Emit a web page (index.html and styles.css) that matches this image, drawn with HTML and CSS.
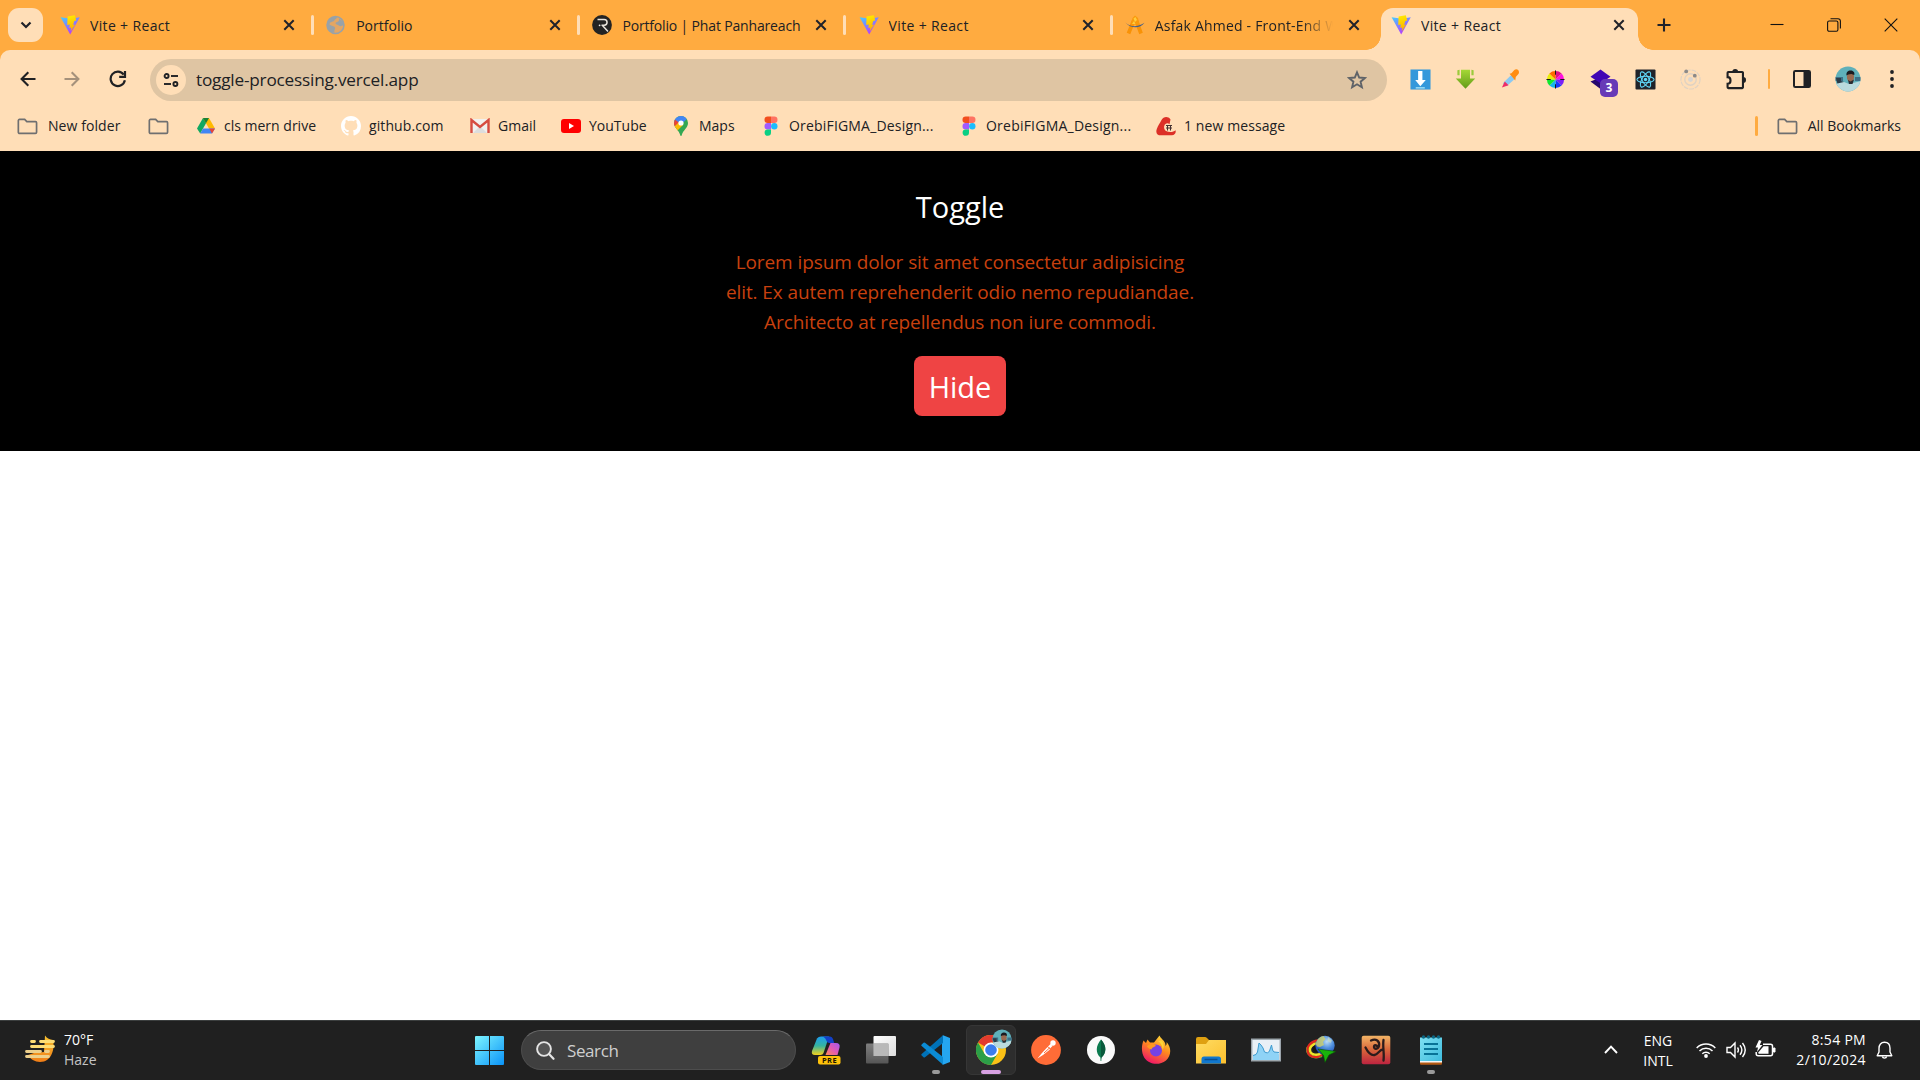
FILE: index.html
```html
<!DOCTYPE html>
<html lang="en">
<head>
<meta charset="utf-8">
<title>Vite + React</title>
<link rel="stylesheet" href="styles.css">
</head>
<body>
<svg class="defs" width="0" height="0">
  <defs>
    <linearGradient id="viteA" x1="0" y1="0" x2=".6" y2="1"><stop offset="0" stop-color="#41d1ff"/><stop offset="1" stop-color="#bd34fe"/></linearGradient>
    <linearGradient id="viteB" x1=".4" y1="0" x2=".6" y2="1"><stop offset="0" stop-color="#ffea00"/><stop offset="1" stop-color="#ffa800"/></linearGradient>
    <linearGradient id="win" x1="0" y1="0" x2="1" y2="1"><stop offset="0" stop-color="#7df5ff"/><stop offset="1" stop-color="#0a93f8"/></linearGradient>
    <linearGradient id="sun" x1="0" y1="0" x2="0" y2="1"><stop offset="0" stop-color="#f8c331"/><stop offset="1" stop-color="#f07d17"/></linearGradient>
    <linearGradient id="copA" x1="0" y1="0" x2="0" y2="1"><stop offset="0" stop-color="#1c9df0"/><stop offset=".5" stop-color="#35b3a0"/><stop offset="1" stop-color="#f5d21c"/></linearGradient>
    <linearGradient id="copB" x1="1" y1="0" x2="0" y2="1"><stop offset="0" stop-color="#a158f2"/><stop offset=".5" stop-color="#e25ab4"/><stop offset="1" stop-color="#ff8a55"/></linearGradient>
    <linearGradient id="ff" x1=".8" y1="0" x2=".3" y2="1"><stop offset="0" stop-color="#ffe23e"/><stop offset=".45" stop-color="#ff8a1e"/><stop offset="1" stop-color="#f0126a"/></linearGradient>
    <linearGradient id="folderG" x1="0" y1="0" x2="1" y2="1"><stop offset="0" stop-color="#ffdc63"/><stop offset="1" stop-color="#fcc02e"/></linearGradient>
    <linearGradient id="avro" x1="0" y1="0" x2="0" y2="1"><stop offset="0" stop-color="#f3b566"/><stop offset=".5" stop-color="#d8653a"/><stop offset="1" stop-color="#bd2340"/></linearGradient>
    <linearGradient id="note" x1="0" y1="0" x2="1" y2="1"><stop offset="0" stop-color="#7fe0f2"/><stop offset="1" stop-color="#3dbbdd"/></linearGradient>
    <linearGradient id="tv" x1="0" y1="0" x2="1" y2="1"><stop offset="0" stop-color="#fff"/><stop offset="1" stop-color="#ddd"/></linearGradient>
    <linearGradient id="tvb" x1="0" y1="0" x2="0" y2="1"><stop offset="0" stop-color="#8a8a8a"/><stop offset="1" stop-color="#5c5c5c"/></linearGradient>
    <linearGradient id="green" x1="0" y1="0" x2="0" y2="1"><stop offset="0" stop-color="#a5d836"/><stop offset="1" stop-color="#629a18"/></linearGradient>
    <radialGradient id="idm" cx=".6" cy=".3" r=".75"><stop offset="0" stop-color="#b9dcf7"/><stop offset=".45" stop-color="#4f8fdc"/><stop offset="1" stop-color="#123fae"/></radialGradient>
    <symbol id="vite" viewBox="0 0 20 20">
      <path d="M.6 2.200 10.200 19.600 19.800 2.200 11 3.800z" fill="url(#viteA)"/>
      <path d="M14.800.2 7.600 1.400 7.200 10l2.600-.4-.5 3.400 2-.4-.5 4 4.300-7-2 .3 1.200-4 2-.3z" fill="url(#viteB)"/>
    </symbol>
    <symbol id="x" viewBox="0 0 12 12"><path d="M1.300 1.300 10.700 10.700M10.700 1.300 1.300 10.700" stroke="#20222a" stroke-width="2" fill="none"/></symbol>
    <symbol id="folder" viewBox="0 0 22 18"><path d="M2.500 1.500H8l2.300 2.400H19.500a1.100 1.100 0 0 1 1.100 1.100V15a1.300 1.300 0 0 1-1.300 1.300H2.700A1.300 1.300 0 0 1 1.300 15V2.700A1.200 1.200 0 0 1 2.500 1.500z" fill="none" stroke="#6f6f70" stroke-width="1.800"/></symbol>
    <symbol id="figma" viewBox="0 0 14 20">
      <path d="M7 .6H3.700a3.200 3.200 0 0 0 0 6.400H7z" fill="#f24e1e"/><path d="M7 .6h3.300a3.200 3.200 0 0 1 0 6.400H7z" fill="#ff7262"/>
      <path d="M7 7H3.700a3.200 3.200 0 0 0 0 6.400H7z" fill="#a259ff"/><circle cx="10.300" cy="10.200" r="3.200" fill="#1abcfe"/>
      <path d="M7 13.400H3.700A3.200 3.200 0 1 0 7 16.600z" fill="#0acf83"/>
    </symbol>
    <symbol id="avatar" viewBox="0 0 26 26">
      <clipPath id="avc"><circle cx="13" cy="13" r="12.500"/></clipPath>
      <g clip-path="url(#avc)"><rect width="26" height="26" fill="#5fb0ba"/><path d="M0 11h8v4H0zM20 11h6v4h-6z" fill="#3d6f86"/><path d="M1 12h5v3l3 1-2 4H3z" fill="#2b3b47"/><path d="M0 18l9-2 5 2 12-3v11H0z" fill="#b9dadd"/><ellipse cx="15.500" cy="11" rx="3.600" ry="5" fill="#9a6a50"/><path d="M11.500 9.500c-.5-3.500 1.500-5 4-5s4.500 1.500 3.800 4.500l-3-1-3 .5z" fill="#1b1b20"/><path d="M13 14l2.500 1.500L19 13.500l-1.500 4.500h-3.500z" fill="#2a2a30"/></g>
    </symbol>
  </defs>
</svg>

<div class="screen">
  <div class="tabstrip">
    <button class="tab-search"><svg width="12" height="8" viewBox="0 0 12 8"><path d="M1.500 1.500 6 6l4.500-4.500" fill="none" stroke="#20222a" stroke-width="2.200"/></svg></button>
    <div class="tab"><svg class="fav"><use href="#vite"/></svg><span class="title t-vite">Vite + React</span><svg class="close"><use href="#x"/></svg><i class="sep"></i></div>
    <div class="tab"><svg class="fav" viewBox="0 0 20 20"><circle cx="9.500" cy="10" r="8.500" fill="#e3a663" stroke="#98a2a8" stroke-width="1.500"/><path d="M2 5.500 6.500 2 11 2c0 2-2.500 2-3 4-1.500 1-4 .5-4.500 3.500C5.500 11 8 11 9 12.500c.5 1.500-1 2-.5 5L5 17c-3-2-4.500-7-3-11.500z" fill="#98a2a8"/><path d="M13 3.500l4 3 1 4c-2 0-3 1-4.500.5C12.500 9.500 10 10 9.500 8.500c0-2 3-1 3.500-3z" fill="#98a2a8"/></svg><span class="title t-port">Portfolio</span><svg class="close"><use href="#x"/></svg><i class="sep"></i></div>
    <div class="tab"><svg class="fav" viewBox="0 0 20 20"><circle cx="10" cy="10" r="9.900" fill="#232323"/><path d="M5.500 4.500h6.700c3.800 0 3.800 5.700 0 5.700H9.500M10.500 10.500l5.500 6" fill="none" stroke="#e8e3dc" stroke-width="1.500"/><circle cx="7.600" cy="10.300" r=".9" fill="#eee"/></svg><span class="title t-phat">Portfolio | Phat Panhareach</span><svg class="close"><use href="#x"/></svg><i class="sep"></i></div>
    <div class="tab"><svg class="fav"><use href="#vite"/></svg><span class="title t-vite">Vite + React</span><svg class="close"><use href="#x"/></svg><i class="sep"></i></div>
    <div class="tab"><svg class="fav" viewBox="0 0 20 20"><path d="M3.500 18.500 8.500 6M16 18.500 11.500 6" stroke="#f99206" stroke-width="3.800"/><path d="M5.800 9.500 7.500 3 10 .5l3 2.500 1.500 6.500z" fill="#f99a0c"/><path d="M8.500 3.500l2-1.500 1.500 3-2 2zM7 9l2-3 1.500 3z" fill="#ffcb3c"/><path d="M.5 7.500c5 5 12 5 19 .3-4.500 6-13.500 6.200-19-.3z" fill="#3f5f8c"/></svg><span class="title t-asfak">Asfak Ahmed - Front-End Web</span><svg class="close"><use href="#x"/></svg></div>
    <div class="tab active"><svg class="fav"><use href="#vite"/></svg><span class="title t-vite">Vite + React</span><svg class="close"><use href="#x"/></svg></div>
    <svg class="newtab" viewBox="0 0 14 14"><path d="M7 .5v13M.5 7h13" stroke="#20222a" stroke-width="2.100"/></svg>
    <div class="winctl">
      <svg width="14" height="14" viewBox="0 0 14 14"><path d="M.5 6.500h13" stroke="#111" stroke-width="1.100"/></svg>
      <svg width="14" height="14" viewBox="0 0 14 14"><rect x=".6" y="3" width="10.300" height="10.300" rx="1.500" fill="none" stroke="#111" stroke-width="1.100"/><path d="M3.500.7h7.500a2.500 2.500 0 0 1 2.400 2.400v7.400" fill="none" stroke="#111" stroke-width="1.100"/></svg>
      <svg width="14" height="14" viewBox="0 0 14 14"><path d="M.7.7l12.600 12.600M13.300.7.7 13.300" stroke="#111" stroke-width="1.100"/></svg>
    </div>
  </div>

  <div class="chrome-bar">
    <div class="toolbar">
      <div class="nav">
        <svg width="16" height="16" viewBox="0 0 16 16"><path d="M15.500 8H2M8.300 1.300 1.600 8l6.700 6.700" fill="none" stroke="#202124" stroke-width="2.100"/></svg>
        <svg width="16" height="16" viewBox="0 0 16 16"><path d="M.5 8H14M7.700 1.300 14.400 8l-6.700 6.700" fill="none" stroke="#a5917b" stroke-width="2.100"/></svg>
        <svg class="reload" width="18" height="18" viewBox="0 0 18 18"><path d="M15.900 10.300A7.200 7.200 0 1 1 14.700 4.600" fill="none" stroke="#202124" stroke-width="2.200"/><path d="M16 1v5.800h-5.800" fill="none" stroke="#202124" stroke-width="2.200"/></svg>
      </div>
      <div class="omnibox">
        <span class="site"><svg width="16" height="14" viewBox="0 0 16 14"><g fill="none" stroke="#202124" stroke-width="1.900"><circle cx="3.600" cy="3" r="2"/><path d="M8 3h7"/><circle cx="12.400" cy="11" r="2"/><path d="M1 11h7"/></g></svg></span>
        <span class="url">toggle-processing.vercel.app</span>
        <svg class="star" width="20" height="20" viewBox="0 0 20 20"><path d="M10 2.300l2.200 5.200 5.700.5-4.300 3.700 1.300 5.500-4.900-2.900-4.900 2.900 1.300-5.500L2.100 8l5.700-.5z" fill="none" stroke="#5f6368" stroke-width="1.900"/></svg>
      </div>
      <div class="exts">
        <svg viewBox="0 0 22 22"><rect x=".5" y=".5" width="21" height="21" fill="#3498db"/><path d="M8.500 2h4.500v9.500h3.500L10.800 18 5.500 11.500h3z" fill="#fff"/><path d="M6 19h9.500v1.500H6z" fill="#9fe0f7"/></svg>
        <svg viewBox="0 0 22 22"><path d="M2.500 1.200 4.800.8V6.500H2.500zM19.500 1.200 17.200.8v5.700h2.300z" fill="#9bcb3c"/><path d="M6.300.8h9.400V10h5.500L11 20.800.8 10h5.500z" fill="url(#green)"/></svg>
        <svg viewBox="0 0 22 22"><path d="M12 6l4 4-9 8-4-3z" fill="#8cc9f2"/><path d="M5 13l4 4-7 2.500z" fill="#ee2c68"/><path d="M10 5l2-.5 3-3.500c3-2 6 1 4.500 4L16.500 8.500 16 12z" fill="#ff8c10"/></svg>
        <svg viewBox="0 0 22 22"><g transform="translate(11 11)"><path d="M0 0V-9A9 9 0 0 1 6.400-6.400z" fill="#e0108a"/><path d="M0 0 6.400-6.400A9 9 0 0 1 9 0z" fill="#ff10e0"/><path d="M0 0H9A9 9 0 0 1 6.400 6.400z" fill="#7a20f8"/><path d="M0 0 6.400 6.400A9 9 0 0 1 0 9z" fill="#1838ff"/><path d="M0 0V9A9 9 0 0 1-6.400 6.400z" fill="#15b5ee"/><path d="M0 0-6.400 6.400A9 9 0 0 1-9 0z" fill="#10e830"/><path d="M0 0H-9A9 9 0 0 1-6.400-6.400z" fill="#e8ec08"/><path d="M0 0-6.400-6.400A9 9 0 0 1 0-9z" fill="#ff6a00"/><path d="M0-9.500V-5M0 5V9.500M-9.500 0H-5M5 0H9.500" stroke="#111" stroke-width="1"/></g></svg>
        <span class="ext-badge"><svg viewBox="0 0 22 22"><path d="M11 9 21 14 11 21 .5 13z" fill="#26076d"/><path d="M11 .5 21.500 8 11 15 .5 8z" fill="#4106b4"/></svg><b>3</b></span>
        <svg viewBox="0 0 22 22"><rect x=".5" y=".5" width="21" height="21" rx="1" fill="#20232a"/><g fill="none" stroke="#61dafb" stroke-width="1.100"><ellipse cx="11" cy="11" rx="9" ry="3.500"/><ellipse cx="11" cy="11" rx="9" ry="3.500" transform="rotate(60 11 11)"/><ellipse cx="11" cy="11" rx="9" ry="3.500" transform="rotate(120 11 11)"/></g><circle cx="11" cy="11" r="1.800" fill="#61dafb"/></svg>
        <svg viewBox="0 0 22 22"><g fill="none" stroke="#dfd2c3"><circle cx="11" cy="11" r="10" stroke-width="1.200" stroke-dasharray="5 1"/><circle cx="11" cy="11" r="6" stroke-width="1.500"/></g><circle cx="11" cy="11" r="2.600" fill="#d8d5d2"/><circle cx="6.500" cy="2.500" r="2" fill="#8c8a89"/><circle cx="15.500" cy="7" r="2" fill="#8c8a89"/></svg>
        <svg viewBox="0 0 22 22"><path d="M3.500 3.200H18a.8.800 0 0 1 .8.800v15.200a.8.800 0 0 1-.8.800H3.500a.8.800 0 0 1-.8-.8V15.500C6.800 15.500 6.800 8.500 2.700 8.500V4a.8.800 0 0 1 .8-.8z" fill="none" stroke="#202124" stroke-width="2.200"/><path d="M7.700 3a3 3 0 0 1 6 0zM19 8.500a3 3 0 0 1 0 6z" fill="#202124"/></svg>
      </div>
      <i class="bar-sep"></i>
      <svg class="panel" viewBox="0 0 18 18"><rect x="1" y="1" width="16" height="16" rx="1.300" fill="none" stroke="#202124" stroke-width="2"/><path d="M10.500 1H17v16h-6.500z" fill="#202124"/></svg>
      <svg class="me"><use href="#avatar"/></svg>
      <svg class="dots" viewBox="0 0 4 18"><g fill="#202124"><circle cx="2" cy="2" r="1.900"/><circle cx="2" cy="9" r="1.900"/><circle cx="2" cy="16" r="1.900"/></g></svg>
    </div>

    <div class="bookmarks">
      <div class="bm b1"><svg class="fold"><use href="#folder"/></svg><span>New folder</span></div>
      <div class="bm b2"><svg class="fold"><use href="#folder"/></svg></div>
      <div class="bm b3"><svg width="18" height="18" viewBox="0 0 18 18"><path d="M6 1h6l-3 5.200-5.800 10.300L0 11.500z" fill="#11a861"/><path d="M6 1h6l6 10.500h-6z" fill="#ffba00"/><path d="M6 1h6L9 6.200z" fill="#188038"/><path d="M6 11.500h12l-3 5H3.200z" fill="#4285f4"/><path d="M12.200 11.500H18l-3 5z" fill="#ea4335"/></svg><span>cls mern drive</span></div>
      <div class="bm b4"><svg width="20" height="20" viewBox="0 0 16 16"><path fill="#fff" d="M8 0C3.580 0 0 3.580 0 8c0 3.540 2.290 6.530 5.470 7.590.4.070.55-.17.55-.38 0-.19-.01-.82-.01-1.490-2.010.37-2.530-.49-2.690-.94-.09-.23-.48-.94-.82-1.130-.28-.15-.68-.52-.01-.53.63-.01 1.080.58 1.230.82.72 1.210 1.870.87 2.330.66.070-.52.28-.87.51-1.070-1.780-.2-3.640-.89-3.640-3.950 0-.87.31-1.590.82-2.150-.08-.2-.36-1.020.08-2.120 0 0 .67-.21 2.200.82.64-.18 1.320-.27 2-.27s1.360.09 2 .27c1.530-1.040 2.200-.82 2.200-.82.44 1.100.16 1.920.08 2.120.51.56.82 1.270.82 2.150 0 3.070-1.870 3.750-3.650 3.950.29.25.54.73.54 1.480 0 1.070-.01 1.930-.01 2.200 0 .21.15.46.55.38A8.010 8.010 0 0 0 16 8c0-4.420-3.580-8-8-8z"/></svg><span>github.com</span></div>
      <div class="bm b5"><svg width="20" height="16" viewBox="0 0 20 16"><rect x="1" y="1" width="18" height="14" fill="#f2f0ee"/><path d="M3 15 10 8l7 7z" fill="#ddd"/><path d="M1.500 15V2l8.500 7 8.500-7v13" fill="none" stroke="#d64c41" stroke-width="2.400"/></svg><span>Gmail</span></div>
      <div class="bm b6"><svg width="20" height="14" viewBox="0 0 20 14"><rect width="20" height="14" rx="3" fill="#f00"/><path d="M8 4l5 3-5 3z" fill="#fff"/></svg><span>YouTube</span></div>
      <div class="bm b7"><svg width="14" height="20" viewBox="0 0 14 20"><clipPath id="pin"><path d="M7 0a7 7 0 0 1 7 7c0 5-5 7-6.300 12.300Q7 21 6.300 19.300C5 14 0 12 0 7a7 7 0 0 1 7-7z"/></clipPath><g clip-path="url(#pin)"><rect width="14" height="20" fill="#34a853"/><path d="M0 0h14L9 6 4.500 10 0 6z" fill="#4285f4"/><path d="M0 3l5 3.500L1.500 11H0z" fill="#ea4335"/><path d="M9 9 2 16l-2-5 5-5z" fill="#fbbc04"/><path d="M8 0l5 3-4.500 4z" fill="#4285f4"/></g><circle cx="7" cy="7" r="2.600" fill="#fff"/></svg><span>Maps</span></div>
      <div class="bm b8"><svg class="fig"><use href="#figma"/></svg><span>OrebiFIGMA_Design...</span></div>
      <div class="bm b9"><svg class="fig"><use href="#figma"/></svg><span>OrebiFIGMA_Design...</span></div>
      <div class="bm b10"><svg width="20" height="20" viewBox="0 0 20 20"><path d="M14.500 3.500C12 0 7.500.5 5.500 4 4 7 2 9.500.8 13c-1.500 4 .7 6.300 4 6.300h11c3 0 4.500-2.800 3.700-5-2 2-6.500 2.500-9.500.7-2.500-1.700-2.500-5.500-.5-7 1.500-1.200 3-.7 4 .3z" fill="#dc2f27"/><path d="M10 9.500h6M10 12h6M11.500 9v5.500M14.500 9v5.500" stroke="#433" stroke-width="1"/></svg><span>1 new message</span></div>
      <i class="bar-sep"></i>
      <div class="bm all"><svg class="fold"><use href="#folder"/></svg><span>All Bookmarks</span></div>
    </div>
  </div>

  <main class="page">
    <section class="hero">
      <h1>Toggle</h1>
      <p>Lorem ipsum dolor sit amet consectetur adipisicing<br>elit. Ex autem reprehenderit odio nemo repudiandae.<br>Architecto at repellendus non iure commodi.</p>
      <button class="hide">Hide</button>
    </section>
  </main>

  <div class="taskbar">
    <div class="weather">
      <svg width="30" height="28" viewBox="0 0 30 28"><path d="M20 .5c2 3 5 4 8 4.500 2 8-1 22-13 22-5 0-10-3-12-7l6-2 10-1z" fill="url(#sun)"/><g stroke-linecap="round" stroke-width="2.800"><path d="M6.500 6.500h3M15.500 6.500h13M6.500 11.500h22" stroke="#fddc74"/><path d="M1.500 16.500h14M20.500 16.500h3M1.500 21.500h22" stroke="#edcf8b"/></g></svg>
      <div><span>70°F</span><span class="dim">Haze</span></div>
    </div>
    <div class="apps">
      <svg class="start" viewBox="0 0 29 29"><path d="M1 0H14V14H0V1A1 1 0 0 1 1 0zM15 0H28A1 1 0 0 1 29 1V14H15zM0 15H14V29H1A1 1 0 0 1 0 28zM15 15H29V28A1 1 0 0 1 28 29H15z" fill="url(#win)"/></svg>
      <div class="search"><svg width="19" height="19" viewBox="0 0 19 19"><circle cx="8" cy="8" r="6.900" fill="#555" stroke="#e4e4e4" stroke-width="1.900"/><path d="M13 13l4.500 4.800" stroke="#e4e4e4" stroke-width="2.200" stroke-linecap="round"/></svg><span>Search</span></div>
      <div class="app"><svg viewBox="0 0 30 30"><path d="M6 3.500Q7.500 1.500 10 1.500h8L12.500 18q-.7 2-3 2H4q-4 0-3-4z" fill="url(#copA)"/><path d="M12 1.500h7q2.300 0 3 2.500l1.200 4h-5q-2 0-2.600-2-.8-3-3.600-4.500z" fill="#1340c8"/><path d="M19.500 8H25q4.500 0 3.500 4.500L26.500 20H14.500z" fill="url(#copB)"/><rect x="7" y="21" width="22.500" height="8.500" rx="2" fill="#ffc20a"/></svg><em class="pre">PRE</em></div>
      <div class="app"><svg viewBox="0 0 30 30"><rect x="7.500" y="1" width="22.500" height="20" rx="1" fill="url(#tv)"/><rect x="0" y="8.500" width="22.500" height="20" rx="1" fill="url(#tvb)" opacity=".9"/><path d="M7.500 8.500h15V21h-15z" fill="#b9b9b9"/></svg></div>
      <div class="app run"><svg viewBox="0 0 30 30"><path d="M22 .3 29 3v24l-7 2.700-1-1V2z" fill="#25a6f0"/><path d="M22 .3V8L4 22.300q-.8.500-1.500 0L.7 20.600q-.9-.8 0-1.600z" fill="#0072b8"/><path d="M22 29.700V22L4 7.700q-.8-.5-1.500 0L.7 9.400q-.9.800 0 1.600z" fill="#0b8bd4"/></svg></div>
      <div class="app current"><svg viewBox="0 0 30 30"><circle cx="15" cy="15" r="15" fill="#fbc116"/><path d="M15 15 2 7.500A15 15 0 0 1 28 7.500H15z" fill="#e33b2e"/><path d="M2 7.500A15 15 0 0 0 15 30L21.500 18.700 15 15 8.500 18.700z" fill="#2c9f48"/><circle cx="15" cy="15" r="7.500" fill="#fff"/><circle cx="15" cy="15" r="5.800" fill="#3b7ded"/></svg><svg class="mini"><use href="#avatar"/></svg></div>
      <div class="app"><svg viewBox="0 0 30 30"><circle cx="15" cy="15" r="14.900" fill="#ff6c37"/><path d="M6.500 23.500l4-5L16.500 12l2.500 2.500-7 5.500zM17 11.500l2.500-2.500 2 2-2.500 2.500z" fill="#fff"/><circle cx="22" cy="8" r="2.700" fill="#fff"/><path d="M13 18l6-5.500" stroke="#ff6c37"/></svg></div>
      <div class="app"><svg viewBox="0 0 30 30"><circle cx="15" cy="15" r="14" fill="#fafafa"/><path d="M15 4.500C21 11 20.500 18 15.500 22.500L15.300 26h-.7l-.2-3.500C9.500 18 9.500 11 15 4.500z" fill="#0b7a4f"/><path d="M15 4.500C21 11 20.500 18 15.500 22.500L15 24z" fill="#08583b"/></svg></div>
      <div class="app"><svg viewBox="0 0 30 30"><path d="M18.500.500C20 4 23 5 24 8q.5 1.500.6 3c1-1 1.200-2.500 1-4C31 13 30 21 25 25.500 18 31 8 29.500 3.500 23 0 17.500.5 10 2.500 5.500L5 8l1.500-3.500L9 7.500h4z" fill="url(#ff)"/><circle cx="15" cy="15.500" r="6" fill="#7542e5"/><path d="M6 11c3-2.500 6-2 9-.5-1 1.500-4 1.500-4.500 4-2-.5-4-1.500-4.500-3.500z" fill="#ff9a1f"/><path d="M17 6c3 2 5 6 4.500 9 2-3 1.500-7-1-9.500z" fill="#ffd536"/></svg></div>
      <div class="app"><svg viewBox="0 0 30 30"><path d="M0 4q0-2 2-2h7q1 0 2 1l2 2h15q2 0 2 2v3H0z" fill="#dfa011"/><path d="M0 9h10l3-4h17v23.500H0z" fill="url(#folderG)"/><path d="M5.500 28.500V24q0-2.500 2.500-2.500h14.500q2.500 0 2.500 2.500v4.500z" fill="#1178cf"/><path d="M8.500 24.500h13" stroke="#0a4f91" stroke-width="1.500"/></svg></div>
      <div class="app"><svg viewBox="0 0 30 30"><rect x=".7" y="4.200" width="28.600" height="21.600" fill="#e9f0f6" stroke="#9aa3aa" stroke-width="1.400"/><path d="M2 20.500l3-1 1.500-2.500L8 8l2 2 2 3 1.500 4 3 1 2-2 2-6 1 5 1.500 2 4 .5 1 2V25H2z" fill="#8fd3f6"/><path d="M2 20.500l3-1 1.500-2.500L8 8l2 2 2 3 1.500 4 3 1 2-2 2-6 1 5 1.500 2 5 .5" fill="none" stroke="#3d9bd0"/></svg></div>
      <div class="app"><svg viewBox="0 0 30 30"><g fill="none"><path d="M1 12.500c-1 7 6 12 15 8.500" stroke="#4cc53f" stroke-width="2.400"/><path d="M12 5.500C5 6.500 0 11.500 2 17.500c2 5 9 6 14 2" stroke="#e0281d" stroke-width="2.400"/><path d="M12 8C6 9 2.800 12.500 4.200 16.500c1.500 3.500 7 4.500 11 1.500" stroke="#f0e329" stroke-width="2.400"/></g><path d="M12 9c-4 1-6.500 3.500-5.500 6s5 3 8 1z" fill="#161616"/><circle cx="19" cy="10.500" r="9.700" fill="url(#idm)"/><path d="M9.800 9C10.500 4.500 14 1.500 17.500 1l2 3-2.500 3 1 3-4 2-3-.5z" fill="#cfd16a" opacity=".8"/><path d="M22 2l4 3.500-1.500 2.500-3-2z" fill="#e6e9b0" opacity=".5"/><path d="M12 14 30 16.500l-7 3.500-4 7.500-1.500-7z" fill="#19b40b" stroke="#0b4a06" stroke-width=".6"/></svg></div>
      <div class="app"><svg viewBox="0 0 30 30"><rect x=".7" y=".7" width="28.600" height="28.600" rx="2" fill="url(#avro)"/><path d="M10 5.500c5-2.500 9 .5 8 5.500-1 3.500-5 3.500-5 1s2.500-2 3.500-.5M4.500 12.500c3 6 5.500 8 9 7.500s5-5.500 8.500-5.500M22.500 5c-1 7 1 14 0 20.500" fill="none" stroke="#2c1c1c" stroke-width="2.300" stroke-linecap="round"/></svg></div>
      <div class="app run"><svg viewBox="0 0 30 30"><rect x="4" y="25" width="22" height="4.700" rx="1" fill="#b45a13"/><path d="M4 2.500h22V27H4z" fill="url(#note)"/><path d="M4 26h22v1.500H4z" fill="#f5f5f5"/><path d="M8 9h14M8 14h14M8 19h14" stroke="#087296" stroke-width="1.900"/><g fill="#0c6783"><circle cx="7.500" cy="2" r="1.700"/><circle cx="12.500" cy="2" r="1.700"/><circle cx="17.500" cy="2" r="1.700"/><circle cx="22.500" cy="2" r="1.700"/></g></svg></div>
    </div>
    <div class="tray">
      <svg class="up" width="14" height="9" viewBox="0 0 14 9"><path d="M1 8l6-6.300L13 8" fill="none" stroke="#fff" stroke-width="1.900"/></svg>
      <div class="lang"><span>ENG</span><span>INTL</span></div>
      <svg class="wifi" width="20" height="16" viewBox="0 0 20 16"><g fill="none" stroke="#fff" stroke-width="1.500"><path d="M.7 6a13 13 0 0 1 18.600 0M3.500 9a9.200 9.200 0 0 1 13 0M6.300 11.800a5.300 5.300 0 0 1 7.400 0"/></g><circle cx="10" cy="14" r="1.900" fill="#fff"/></svg>
      <svg class="vol" width="20" height="18" viewBox="0 0 20 18"><g fill="none" stroke="#fff" stroke-width="1.400"><path d="M1 6.500h3.500L9 2v14l-4.500-4.500H1z"/><path d="M11.500 6.500q1.800 2.500 0 5M14 4.300q3.800 4.700 0 9.400M16.500 2q5.500 7 0 14"/></g></svg>
      <svg class="bat" width="21" height="18" viewBox="0 0 21 18"><path d="M8 4.200h7.500a2 2 0 0 1 2 2v7.600a2 2 0 0 1-2 2H3.200a2 2 0 0 1-2-2V12" fill="none" stroke="#fff" stroke-width="1.500"/><path d="M18.500 8H20v4h-1.500z" stroke="#fff" fill="#fff"/><path d="M8.500 6.200h5v7.500H3.500v-1.500z" fill="#fff"/><path d="M4 0 .5 7.500H3L2 12 7.500 5H4.800L6.500 1z" fill="#fff"/></svg>
      <div class="clock"><span class="tm">8:54 PM</span><span class="dt">2/10/2024</span></div>
      <svg class="bell" width="17" height="19" viewBox="0 0 17 19"><path d="M8.500 1.200c3.500 0 5.500 2.600 5.500 6V11l1.800 3.700H1.200L3 11V7.200c0-3.400 2-6 5.500-6z" fill="none" stroke="#fff" stroke-width="1.400" stroke-linejoin="round"/><path d="M6.300 15.500a2.300 2.300 0 0 0 4.400 0" fill="none" stroke="#fff" stroke-width="1.400"/></svg>
    </div>
  </div>
</div>
</body>
</html>
```
FILE: styles.css
```css
* { box-sizing: border-box; }
body { margin: 0; font-family: "Open Sans", "Noto Sans", sans-serif; color: #202124; overflow: hidden; }
button { font: inherit; border: 0; padding: 0; }
svg { display: block; flex: none; }
.defs { position: absolute; }
.screen { width: 1920px; height: 1080px; display: flex; flex-direction: column; background: #fff; }

/* tab strip */
.tabstrip { height: 50px; background: #ffab40; display: flex; align-items: flex-start; flex: none; }
.tab-search { width: 35px; height: 34px; margin: 8px 7px 0 8px; border-radius: 11px; background: #ffdeb7; display: flex; align-items: center; justify-content: center; flex: none; }
.tab { width: 266.2px; height: 50px; padding: 0 2px 0 10px; display: flex; align-items: center; flex: none; }
.fav { width: 20px; height: 20px; margin-right: 10px; }
.title { width: 180px; flex: none; margin-right: 13px; font-size: 14px; line-height: 20px; padding-top: 1px; white-space: nowrap; overflow: hidden; }
.close { width: 12px; height: 12px; }
.sep { width: 3px; height: 20px; border-radius: 2px; background: #ffdeb7; margin-left: 16px; flex: none; }
.tab.active { position: relative; width: 257px; height: 42px; margin: 8px 16px 0 0; padding-bottom: 8px; border-radius: 12px 12px 0 0; background: #ffdeb7; }
.tab.active .title { margin-right: 12px; }
.tab.active::before, .tab.active::after { content: ""; position: absolute; bottom: 0; width: 15px; height: 15px; }
.tab.active::before { left: -15px; background: radial-gradient(circle at 0 0, transparent 14.5px, #ffdeb7 15px); }
.tab.active::after { right: -15px; background: radial-gradient(circle at 100% 0, transparent 14.5px, #ffdeb7 15px); }
.t-vite { letter-spacing: .35px; }
.t-phat { letter-spacing: -.16px; }
.t-asfak { width: 178px; margin-right: 15px; letter-spacing: .2px; -webkit-mask-image: linear-gradient(90deg, #000 82%, transparent 100%); mask-image: linear-gradient(90deg, #000 82%, transparent 100%); }
.newtab { width: 14px; height: 14px; margin: 18px 0 0 3px; }
.winctl { margin: 18px 22px 0 auto; display: flex; gap: 43px; }

/* toolbar */
.chrome-bar { height: 101px; flex: none; background: linear-gradient(#ffab40 12px, transparent 12px); }
.toolbar { height: 58px; border-radius: 10px 10px 0 0; background: #ffdeb7; display: flex; align-items: center; padding: 0 26px 0 20px; }
.nav { width: 130px; flex: none; display: flex; align-items: center; gap: 28px; }
.reload { margin-left: 1px; }
.omnibox { width: 1237px; flex: none; height: 42px; margin-top: 1px; border-radius: 21px; background: #dfc5a3; display: flex; align-items: center; padding: 0 20px 0 6px; }
.site { width: 30px; height: 30px; border-radius: 50%; background: #ffdeb7; display: flex; align-items: center; justify-content: center; }
.url { margin-left: 10px; font-size: 17.200px; line-height: 24px; letter-spacing: -.2px; }
.star { margin-left: auto; }
.exts { display: flex; gap: 24px; margin-left: 23px; align-items: center; }
.exts svg { width: 21px; height: 21px; }
.ext-badge { position: relative; width: 21px; height: 21px; }
.ext-badge b { position: absolute; left: 10px; top: 10px; width: 18px; height: 18px; border-radius: 5px; background: #673ab7; color: #fff; font-size: 12px; line-height: 18px; text-align: center; }
.bar-sep { width: 3px; height: 20px; border-radius: 2px; background: #ffab40; flex: none; }
.toolbar .bar-sep { width: 2px; margin: 0 23px 0 22px; }
.panel { width: 18px; height: 18px; margin-right: 24px; }
.me { width: 26px; height: 26px; margin-right: auto; }
.dots { width: 4px; height: 18px; }

/* bookmarks */
.bookmarks { height: 43px; background: #ffdeb7; display: flex; align-items: center; padding: 0 19px 7px 17px; }
.bm { display: flex; align-items: center; flex: none; height: 20px; font-size: 14px; line-height: 20px; white-space: nowrap; }
.fold { width: 21px; height: 17px; margin-right: 10px; }
.fig { width: 14px; height: 20px; }
.b1 { width: 131px; letter-spacing: .08px; }
.b2 { width: 49px; }
.b3 { width: 144px; gap: 9px; }
.b4 { width: 129px; gap: 8px; letter-spacing: .1px; }
.b5 { width: 91px; gap: 8px; }
.b6 { width: 113px; gap: 8px; }
.b7 { width: 90px; gap: 11px; }
.b8 { width: 198px; gap: 11px; letter-spacing: .18px; }
.b9 { width: 194px; gap: 10px; letter-spacing: .22px; }
.b10 { gap: 8px; letter-spacing: .1px; }
.bookmarks .bar-sep { margin: 0 19px 0 auto; }

/* page */
.page { flex: 1; background: #fff; }
.hero { height: 300px; background: #000; display: flex; flex-direction: column; align-items: center; padding-top: 36px; }
.hero h1 { margin: 0 0 20px; font-weight: 400; font-size: 29px; line-height: 40px; color: #fff; }
.hero p { margin: 0; width: 500px; text-align: center; white-space: nowrap; font-size: 19px; line-height: 30px; letter-spacing: -.08px; color: #c8400e; }
.hide { width: 92px; height: 60px; margin-top: 19px; border-radius: 8px; background: #ef4444; color: #fff; font-size: 29px; line-height: 40px; padding: 11px 0 9px; }

/* taskbar */
.taskbar { height: 60px; flex: none; background: #202020; border-top: 1px solid #3b3e3e; display: flex; color: #fff; font-size: 14px; line-height: 20px; }
.taskbar span { display: block; }
.weather { width: 475px; padding: 9px 0 0 25px; display: flex; gap: 9px; }
.weather svg { margin-top: 5px; }
.weather .dim { color: #c4c4c4; }
.apps { display: flex; align-items: flex-start; }
.start { width: 29px; height: 29px; margin: 15px 17px 0 0; }
.search { width: 275px; height: 40px; margin: 9px 5px 0 0; border-radius: 20px; background: #3f3f3f; border: 1px solid #4d4d4d; border-top-color: #6a6a6a; display: flex; align-items: center; padding-left: 14px; gap: 12px; font-size: 17px; color: #cfcfcf; letter-spacing: -.4px; }
.search span { padding-top: 2px; }
.app { position: relative; width: 50px; height: 50px; margin: 4px 5px 0 0; padding: 10px; border-radius: 6px; flex: none; }
.app > svg { width: 30px; height: 30px; }
.app .pre { position: absolute; left: 17px; top: 31px; width: 23px; font: 700 7.500px/9px "Open Sans", sans-serif; text-align: center; color: #1c1400; letter-spacing: .4px; }
.run::after, .current::after { content: ""; position: absolute; left: 21px; bottom: 1px; width: 8px; height: 4px; border-radius: 2px; background: #9a9a9a; }
.current { background: #2d2d2d; border: 1px solid #363636; padding: 9px; }
.current::after { left: 14px; bottom: 0; width: 20px; background: #d8a1e3; }
.app > .mini { position: absolute; left: 25px; top: 3px; width: 20px; height: 20px; }
.tray { flex: 1; display: flex; padding: 0 27px 0 0; justify-content: flex-end; }
.up { margin: 24px 25px 0 0; }
.lang { width: 30px; margin: 10px 23px 0 0; text-align: center; }
.wifi { margin: 21px 10px 0 0; }
.vol { margin: 20px 9px 0 0; }
.bat { margin: 19px 0 0; }
.clock { width: 90px; margin: 9px 10px 0 0; text-align: right; }
.tm { letter-spacing: .3px; }
.dt { letter-spacing: .38px; }
.bell { margin-top: 20px; }
```
